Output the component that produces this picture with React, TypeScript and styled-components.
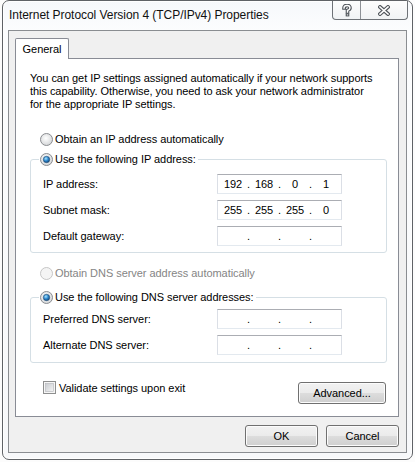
import styled, { createGlobalStyle } from "styled-components";

const GlobalStyle = createGlobalStyle`
  html, body {
    margin: 0;
    padding: 0;
  }
  body {
    background: #fcfcfc;
    font-family: "Liberation Sans", Arial, sans-serif;
    font-size: 11px;
    letter-spacing: -0.05px;
    color: #000;
  }
`;

const Window = styled.div`
  box-sizing: border-box;
  width: 411px;
  height: 460px;
  margin-left: 2px;
  border: 1px solid #5f6266;
  border-radius: 7px;
  background: linear-gradient(180deg, #f6f8fb 0%, #fcfdfe 30px, #f7f8fa 100%);
  box-shadow: inset 0 0 0 1px #ffffff;
  display: flex;
  flex-direction: column;
`;

const TitleBar = styled.div`
  height: 29px;
  display: flex;
  justify-content: space-between;
  align-items: flex-start;
  padding-left: 6px;
  box-sizing: border-box;
`;

const Title = styled.div`
  margin-top: 6px;
  line-height: 16px;
  font-size: 12px;
  color: #111;
`;

const Captions = styled.div`
  display: flex;
  margin-right: 4px;
  height: 18px;
  border: 1px solid #6e7277;
  border-top: none;
  border-radius: 0 0 4px 4px;
  background: linear-gradient(180deg, #fdfdfd, #f1f3f5);
`;

const CaptionButton = styled.div<{ $w: number; $divider?: boolean }>`
  width: ${(p) => p.$w}px;
  display: flex;
  align-items: center;
  justify-content: center;
  border-right: ${(p) => (p.$divider ? "1px solid #8d9196" : "none")};
`;

const Client = styled.div`
  flex: 1;
  margin: 0 5px 6px 5px;
  border: 1px solid #8a8d91;
  background: #f0f0f0;
  padding: 7px 6px 0 6px;
  display: flex;
  flex-direction: column;
`;

const TabStrip = styled.div`
  display: flex;
  height: 20px;
  position: relative;
  z-index: 1;
`;

const Tab = styled.div`
  box-sizing: border-box;
  width: 54px;
  height: 21px;
  border: 1px solid #898c95;
  border-bottom: none;
  border-radius: 2px 2px 0 0;
  background: #fff;
  display: flex;
  align-items: center;
  justify-content: center;
  padding-bottom: 1px;
`;

const Panel = styled.div`
  box-sizing: border-box;
  width: 384px;
  height: 359px;
  border: 1px solid #898c95;
  background: #fff;
  display: flex;
  flex-direction: column;
`;

const Description = styled.p`
  margin: 13px 0 0 14px;
  line-height: 13px;
`;

const Choice = styled.label<{ $top: number; $disabled?: boolean }>`
  display: flex;
  align-items: center;
  gap: 2px;
  height: 16px;
  margin: ${(p) => p.$top}px 0 0 24px;
  color: ${(p) => (p.$disabled ? "#858585" : "#000")};
`;

const Group = styled.fieldset<{ $top: number; $padTop: number; $padBottom: number }>`
  margin: ${(p) => p.$top}px 11px 0 14px;
  padding: ${(p) => p.$padTop}px 0 ${(p) => p.$padBottom}px 0;
  border: 1px solid #d5dfe5;
  border-radius: 3px;
  min-inline-size: auto;
`;

const Legend = styled.legend`
  margin-left: 8px;
  padding: 0 2px 0 1px;
  display: flex;
  align-items: center;
  gap: 2px;
  height: 16px;
`;

const Rows = styled.div`
  display: flex;
  flex-direction: column;
  gap: 6px;
  padding-left: 12px;
`;

const Row = styled.div`
  display: grid;
  grid-template-columns: 174px 125px;
  align-items: center;
`;

const AddressBox = styled.div`
  box-sizing: border-box;
  height: 20px;
  border: 1px solid #dbdfe6;
  border-top-color: #abadb3;
  border-bottom-color: #e3e9ef;
  background: #fff;
  display: flex;
  align-items: center;
  padding-left: 3px;
`;

const Octet = styled.span`
  width: 24px;
  text-align: center;
`;

const Dot = styled.span`
  width: 7px;
  text-align: center;
`;

const Footer = styled.div`
  display: flex;
  justify-content: space-between;
  align-items: flex-start;
  margin-top: 18px;
  padding: 0 12px 0 27px;
`;

const CheckLabel = styled.label`
  display: flex;
  align-items: center;
  gap: 3px;
  height: 13px;
`;

const Button = styled.button<{ $w: number }>`
  box-sizing: border-box;
  width: ${(p) => p.$w}px;
  height: 22px;
  padding: 0;
  border: 1px solid #707070;
  border-radius: 3px;
  background: linear-gradient(180deg, #f2f2f2 0%, #ebebeb 49%, #dddddd 50%, #cfcfcf 100%);
  box-shadow: inset 0 0 0 1px #fcfcfc;
  font-family: inherit;
  font-size: 11px;
  letter-spacing: inherit;
  color: #000;
`;

const ButtonRow = styled.div`
  display: flex;
  justify-content: flex-end;
  gap: 8px;
  margin-top: 8px;
  padding-right: 1px;
`;

const AdvancedButton = styled(Button)`
  margin-top: 1px;
`;

function Radio({ checked, disabled }: { checked?: boolean; disabled?: boolean }) {
  return (
    <svg width="13" height="13" viewBox="0 0 13 13">
      <defs>
        <radialGradient id="rface" cx="0.45" cy="0.4" r="0.6">
          <stop offset="0" stopColor="#ffffff" />
          <stop offset="1" stopColor="#d4d6d8" />
        </radialGradient>
        <radialGradient id="rdot" cx="0.4" cy="0.35" r="0.7">
          <stop offset="0" stopColor="#a8e4ff" />
          <stop offset="0.5" stopColor="#2f8ad0" />
          <stop offset="1" stopColor="#0b3f73" />
        </radialGradient>
      </defs>
      <circle
        cx="6.5"
        cy="6.5"
        r="6"
        fill={disabled ? "#f4f4f4" : "url(#rface)"}
        stroke={disabled ? "#c5c5c5" : "#8a8d91"}
      />
      {checked && <circle cx="6.5" cy="6.5" r="3.2" fill="url(#rdot)" stroke="#274d72" strokeWidth="0.6" />}
    </svg>
  );
}

function Checkbox() {
  return (
    <svg width="13" height="13" viewBox="0 0 13 13">
      <defs>
        <linearGradient id="cface" x1="0" y1="0" x2="1" y2="1">
          <stop offset="0" stopColor="#c9ccd1" />
          <stop offset="1" stopColor="#f4f4f4" />
        </linearGradient>
      </defs>
      <rect x="0.5" y="0.5" width="12" height="12" fill="#f6f6f6" stroke="#8e8f8f" />
      <rect x="2.5" y="2.5" width="8" height="8" fill="url(#cface)" stroke="#b3b5b9" strokeWidth="0.6" />
    </svg>
  );
}

function HelpGlyph() {
  return (
    <svg width="10" height="13" viewBox="0 0 10 13">
      <path
        d="M2 4 Q2 1.5 5 1.5 Q8 1.5 8 4 Q8 5.5 5.5 6.5 L5.5 8"
        fill="none"
        stroke="#50555b"
        strokeWidth="3.6"
        strokeLinecap="square"
      />
      <rect x="3.7" y="9.4" width="3.6" height="3" fill="#50555b" />
      <path
        d="M2 4 Q2 1.5 5 1.5 Q8 1.5 8 4 Q8 5.5 5.5 6.5 L5.5 8"
        fill="none"
        stroke="#ffffff"
        strokeWidth="1.4"
        strokeLinecap="square"
      />
      <rect x="4.8" y="10.4" width="1.4" height="1" fill="#ffffff" />
    </svg>
  );
}

function CloseGlyph() {
  return (
    <svg width="12" height="11" viewBox="0 0 12 11">
      <path d="M2 2 L10 9 M10 2 L2 9" stroke="#50555b" strokeWidth="3.8" strokeLinecap="square" />
      <path d="M2 2 L10 9 M10 2 L2 9" stroke="#ffffff" strokeWidth="1.6" strokeLinecap="square" />
    </svg>
  );
}

function IpField({ octets }: { octets?: string[] }) {
  const parts = octets ?? ["", "", "", ""];
  return (
    <AddressBox>
      {parts.map((o, i) => (
        <span key={i} style={{ display: "contents" }}>
          <Octet>{o}</Octet>
          {i < 3 && <Dot>.</Dot>}
        </span>
      ))}
    </AddressBox>
  );
}

export default function App() {
  return (
    <>
      <GlobalStyle />
      <Window>
        <TitleBar>
          <Title>Internet Protocol Version 4 (TCP/IPv4) Properties</Title>
          <Captions>
            <CaptionButton $w={27} $divider>
              <HelpGlyph />
            </CaptionButton>
            <CaptionButton $w={46}>
              <CloseGlyph />
            </CaptionButton>
          </Captions>
        </TitleBar>

        <Client>
          <TabStrip>
            <Tab>General</Tab>
          </TabStrip>
          <Panel>
            <Description>
              You can get IP settings assigned automatically if your network supports
              <br />
              this capability. Otherwise, you need to ask your network administrator
              <br />
              for the appropriate IP settings.
            </Description>

            <Choice $top={20}>
              <Radio />
              Obtain an IP address automatically
            </Choice>

            <Group $top={4} $padTop={7} $padBottom={6}>
              <Legend>
                <Radio checked />
                Use the following IP address:
              </Legend>
              <Rows>
                <Row>
                  <span>IP address:</span>
                  <IpField octets={["192", "168", "0", "1"]} />
                </Row>
                <Row>
                  <span>Subnet mask:</span>
                  <IpField octets={["255", "255", "255", "0"]} />
                </Row>
                <Row>
                  <span>Default gateway:</span>
                  <IpField />
                </Row>
              </Rows>
            </Group>

            <Choice $top={12} $disabled>
              <Radio disabled />
              Obtain DNS server address automatically
            </Choice>

            <Group $top={8} $padTop={4} $padBottom={7}>
              <Legend>
                <Radio checked />
                Use the following DNS server addresses:
              </Legend>
              <Rows>
                <Row>
                  <span>Preferred DNS server:</span>
                  <IpField />
                </Row>
                <Row>
                  <span>Alternate DNS server:</span>
                  <IpField />
                </Row>
              </Rows>
            </Group>

            <Footer>
              <CheckLabel>
                <Checkbox />
                Validate settings upon exit
              </CheckLabel>
              <AdvancedButton $w={88}>Advanced...</AdvancedButton>
            </Footer>
          </Panel>

          <ButtonRow>
            <Button $w={73}>OK</Button>
            <Button $w={73}>Cancel</Button>
          </ButtonRow>
        </Client>
      </Window>
    </>
  );
}
